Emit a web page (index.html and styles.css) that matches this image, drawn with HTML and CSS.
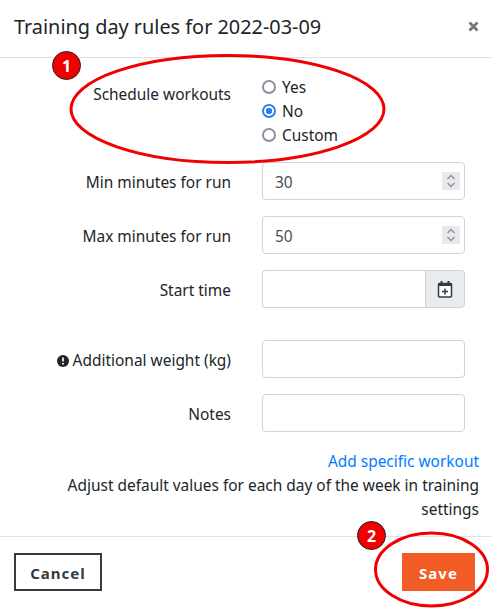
FILE: index.html
```html
<!DOCTYPE html>
<html lang="en">
<head>
    <meta charset="UTF-8">
    <meta name="viewport" content="width=device-width, initial-scale=1.0">
    <title>Training day rules</title>
    <link rel="stylesheet" href="styles.css">
</head>
<body>
    <div class="modal">
        <div class="modal-header">
            <h1>Training day rules for 2022-03-09</h1>
            <button class="close" type="button" aria-label="Close">
                <svg width="11" height="11" viewBox="0 0 11 11">
                    <path d="M1.5 1.5l8 8M9.5 1.5l-8 8" stroke="#777" stroke-width="2.8" fill="none"/>
                </svg>
            </button>
        </div>
        <form class="modal-body">
            <div class="row row-radios">
                <label class="row-label">Schedule workouts</label>
                <div class="radios">
                    <label class="radio"><input type="radio" name="schedule">Yes</label>
                    <label class="radio"><input type="radio" name="schedule" checked>No</label>
                    <label class="radio"><input type="radio" name="schedule">Custom</label>
                </div>
            </div>
            <div class="row">
                <label class="row-label">Min minutes for run</label>
                <div class="number">
                    <input class="field" type="number" value="30">
                    <span class="spin">
                        <svg width="10" height="14" viewBox="0 0 10 14">
                            <path d="M1.5 5L5 1.5L8.500 5M1.5 9L5 12.5L8.500 9" stroke="#8f8f9d" stroke-width="1.4" fill="none"/>
                        </svg>
                    </span>
                </div>
            </div>
            <div class="row">
                <label class="row-label">Max minutes for run</label>
                <div class="number">
                    <input class="field" type="number" value="50">
                    <span class="spin">
                        <svg width="10" height="14" viewBox="0 0 10 14">
                            <path d="M1.5 5L5 1.5L8.500 5M1.5 9L5 12.5L8.500 9" stroke="#8f8f9d" stroke-width="1.4" fill="none"/>
                        </svg>
                    </span>
                </div>
            </div>
            <div class="row">
                <label class="row-label">Start time</label>
                <div class="input-group">
                    <input class="field" type="text">
                    <span class="addon">
                        <svg width="16" height="17" viewBox="0 0 16 17">
                            <path d="M4.500 0v3M11.500 0v3" stroke="#343a40" stroke-width="2" fill="none"/>
                            <rect x="1.500" y="2.500" width="13" height="13.500" rx="1" fill="#fff" stroke="#343a40" stroke-width="1.500"/>
                            <rect x="1" y="2" width="14" height="3" fill="#343a40"/>
                            <path d="M8 7.500v6M5 10.500h6" stroke="#343a40" stroke-width="1.500" fill="none"/>
                        </svg>
                    </span>
                </div>
            </div>
            <div class="row row-spaced">
                <label class="row-label">
                    <svg class="info" width="12" height="12" viewBox="0 0 12 12">
                        <circle cx="6" cy="6" r="6" fill="#212529"/>
                        <path d="M6 2.500v4M6 8v1.600" stroke="#fff" stroke-width="1.700" fill="none"/>
                    </svg>
                    Additional weight (kg)
                </label>
                <input class="field" type="text">
            </div>
            <div class="row">
                <label class="row-label">Notes</label>
                <input class="field" type="text">
            </div>
            <div class="extra">
                <a href="#">Add specific workout</a>
                <p>Adjust default values for each day of the week in training settings</p>
            </div>
        </form>
        <div class="modal-footer">
            <button class="btn btn-cancel" type="button">Cancel</button>
            <button class="btn btn-save" type="button">Save</button>
        </div>
    </div>

    <svg class="marks" width="492" height="608" viewBox="0 0 492 608">
        <ellipse cx="227.500" cy="109" rx="156.500" ry="53.500" fill="none" stroke="#f00000" stroke-width="3"/>
        <ellipse cx="431.500" cy="569.500" rx="56" ry="36.500" fill="none" stroke="#f00000" stroke-width="3"/>
    </svg>
    <span class="badge badge-one">1</span>
    <span class="badge badge-two">2</span>
</body>
</html>
```

FILE: styles.css
```css
* {
    box-sizing: border-box;
}
body {
    margin: 0;
    font-family: "Noto Sans", sans-serif;
    font-size: 15.45px;
    line-height: 24px;
    color: #212529;
    background-color: #fff;
}
.modal {
    width: 492px;
    height: 608px;
    display: flex;
    flex-direction: column;
}
.modal-header {
    height: 58px;
    padding: 0 13px 4px 14px;
    display: flex;
    align-items: center;
    justify-content: space-between;
    border-bottom: 1px solid #dee2e6;
}
.modal-header h1 {
    margin: 0;
    font-size: 19.87px;
    font-weight: 400;
}
.close {
    display: flex;
    padding: 0;
    border: none;
    background: none;
}
.modal-body {
    flex: 1;
    padding: 17px 13px 0 0;
}
.row {
    display: grid;
    grid-template-columns: 231px 203px;
    column-gap: 31px;
    align-items: center;
    margin-bottom: 16px;
}
.row-radios {
    align-items: start;
    margin-bottom: 15px;
}
.row-radios .row-label {
    padding-top: 7px;
}
.row-spaced {
    margin-top: 32px;
}
.row-label {
    padding-top: 2px;
    text-align: right;
}
.info {
    vertical-align: -1px;
}
.radios {
    display: flex;
    flex-direction: column;
}
.radio {
    display: flex;
    align-items: center;
    height: 24px;
}
.radio input {
    appearance: none;
    flex: none;
    width: 14px;
    height: 14px;
    margin: 0 6px 0 0;
    border: 2px solid #8f8f9d;
    border-radius: 50%;
    background-color: #fff;
}
.radio input:checked {
    border-color: #2f80ed;
    background-image: radial-gradient(circle, #2f80ed 0 3px, #fff 3.5px);
}
.field {
    width: 100%;
    height: 38px;
    padding: 2px 12px 0;
    border: 1px solid #ced4da;
    border-radius: 4px;
    font: inherit;
    color: #495057;
}
.number {
    position: relative;
}
.number input {
    appearance: textfield;
}
input[type="number"]::-webkit-inner-spin-button {
    appearance: none;
}
.spin {
    position: absolute;
    right: 5px;
    top: 10px;
    width: 18px;
    height: 18px;
    display: flex;
    align-items: center;
    justify-content: center;
    background-color: #e9e9ed;
}
.input-group {
    display: flex;
}
.input-group .field {
    border-radius: 4px 0 0 4px;
    border-right: none;
}
.addon {
    flex: none;
    width: 40px;
    height: 38px;
    display: flex;
    align-items: center;
    justify-content: center;
    background-color: #e9ecef;
    border: 1px solid #ced4da;
    border-radius: 0 4px 4px 0;
}
.extra {
    margin-top: 17px;
    text-align: right;
}
.extra a {
    color: #007bff;
    text-decoration: none;
}
.extra p {
    margin: 0 0 0 40px;
}
.modal-footer {
    height: 72px;
    padding: 16px 17px 0 14px;
    display: flex;
    justify-content: space-between;
    align-items: flex-start;
    border-top: 1px solid #dee2e6;
}
.btn {
    height: 38px;
    padding: 2px 0 0;
    font: inherit;
    font-size: 15px;
    font-weight: 700;
    letter-spacing: 1px;
}
.btn-cancel {
    width: 88px;
    background-color: #fff;
    border: 2px solid #343a40;
    color: #343a40;
}
.btn-save {
    width: 73px;
    background-color: #f25c27;
    border: none;
    color: #fff;
}
.marks {
    position: absolute;
    left: 0;
    top: 0;
}
.badge {
    position: absolute;
    width: 29px;
    height: 29px;
    display: flex;
    align-items: center;
    justify-content: center;
    border: 1px solid #222;
    border-radius: 50%;
    background-color: #f00000;
    color: #fff;
    font-weight: 700;
    font-size: 16px;
}
.badge-one {
    left: 52px;
    top: 51px;
}
.badge-two {
    left: 357px;
    top: 521px;
}
```
